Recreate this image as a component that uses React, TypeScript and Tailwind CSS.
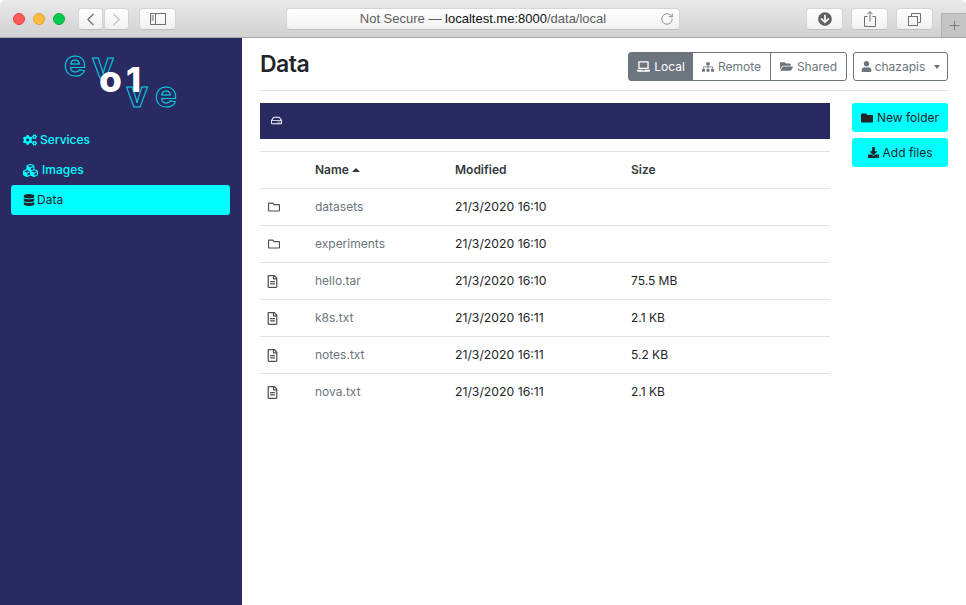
import { ChevronLeft, ChevronRight, RotateCw, Plus } from "lucide-react";
import {
  FaCogs,
  FaCubes,
  FaDatabase,
  FaLaptop,
  FaSitemap,
  FaFolderOpen,
  FaUser,
  FaFolder,
  FaDownload,
  FaRegHdd,
  FaRegFolder,
  FaRegFileAlt,
  FaArrowCircleDown,
} from "react-icons/fa";

const FILES = [
  { name: "datasets", modified: "21/3/2020 16:10", size: "", dir: true },
  { name: "experiments", modified: "21/3/2020 16:10", size: "", dir: true },
  { name: "hello.tar", modified: "21/3/2020 16:10", size: "75.5 MB", dir: false },
  { name: "k8s.txt", modified: "21/3/2020 16:11", size: "2.1 KB", dir: false },
  { name: "notes.txt", modified: "21/3/2020 16:11", size: "5.2 KB", dir: false },
  { name: "nova.txt", modified: "21/3/2020 16:11", size: "2.1 KB", dir: false },
];

function ToolButton({ className, children }: { className: string; children?: React.ReactNode }) {
  return (
    <div
      className={`h-[22px] flex items-center justify-center rounded-[4px] bg-gradient-to-b from-white to-[#f1f1f1] border border-[#d4d4d4] border-b-[#bdbdbd] ${className}`}
    >
      {children}
    </div>
  );
}

function TitleBar() {
  return (
    <div className="h-[38px] flex-shrink-0 flex items-start bg-gradient-to-b from-[#ebeaeb] to-[#d2d1d2] border-b border-[#a9a9a9] rounded-t-[5px] font-['Liberation_Sans',sans-serif]">
      {/* Traffic lights */}
      <div className="flex gap-2 pl-[13px] pt-[13px] w-[78px]">
        <span className="w-3 h-3 rounded-full bg-[#fc5b57] border border-[#e3483f]" />
        <span className="w-3 h-3 rounded-full bg-[#fdbc40] border border-[#e0a030]" />
        <span className="w-3 h-3 rounded-full bg-[#00ca4e] border border-[#13ae3c]" />
      </div>
      <div className="flex gap-px pt-2">
        <ToolButton className="w-[25px]">
          <ChevronLeft size={21} strokeWidth={1.4} className="text-[#6f6f6f]" />
        </ToolButton>
        <ToolButton className="w-[25px]">
          <ChevronRight size={21} strokeWidth={1.4} className="text-[#c2c2c2]" />
        </ToolButton>
      </div>
      <div className="pt-2 pl-[10px]">
        <ToolButton className="w-[37px]">
          <svg width="16" height="12" viewBox="0 0 16 12" fill="none" stroke="#707070">
            <rect x="0.5" y="0.5" width="15" height="11" />
            <path d="M5.5 0.5V11.5M1.5 3H4M1.5 5H4M1.5 7H4" />
          </svg>
        </ToolButton>
      </div>
      <div className="pt-2 pl-[110px]">
        <ToolButton className="w-[394px] relative text-[13px] text-[#5f5f5f]">
          <span>
            Not Secure — <span className="text-[#111]">localtest.me:8000</span>/data/local
          </span>
          <RotateCw size={14} strokeWidth={1.2} className="absolute right-[5px] top-[3px] text-[#666]" />
        </ToolButton>
      </div>
      <div className="flex gap-2 pt-2 pl-[126px]">
        <ToolButton className="w-[37px]">
          <FaArrowCircleDown size={14} className="text-[#5f5f5f]" />
        </ToolButton>
        <ToolButton className="w-[37px]">
          <svg width="12" height="16" viewBox="0 0 12 16" fill="none" stroke="#707070">
            <path d="M3.5 5.5H0.5V15.5H11.5V5.5H8.5M6 10.5V0.8M3.5 3L6 0.7L8.5 3" />
          </svg>
        </ToolButton>
        <ToolButton className="w-[37px]">
          <svg width="13" height="13" viewBox="0 0 13 13" fill="none" stroke="#707070">
            <rect x="0.5" y="3.5" width="9" height="9" />
            <path d="M3.5 3.5V0.5H12.5V9.5H9.5" />
          </svg>
        </ToolButton>
      </div>
      <div className="ml-2 mt-[13px] w-[25px] h-6 flex items-center justify-center bg-[#c6c5c6] border-l border-t border-[#b0b0b0]">
        <Plus size={15} strokeWidth={1} className="text-[#555]" />
      </div>
    </div>
  );
}

function Logo() {
  return (
    <svg width="120" height="60" viewBox="0 0 120 60" className="overflow-visible font-['Inter',sans-serif]">
      <g fill="none" stroke="#00d2e0" strokeWidth="1" fontSize="37" fontWeight="700">
        <text x="-1" y="23">e</text>
        <text x="27" y="25">v</text>
        <text x="61" y="54">v</text>
        <text x="90" y="54">e</text>
      </g>
      <g fill="#fff" fontWeight="800">
        <text x="34" y="39" fontSize="37">o</text>
        <text x="61" y="39" fontSize="34">1</text>
      </g>
    </svg>
  );
}

function Sidebar() {
  return (
    <aside className="w-[242px] flex-shrink-0 bg-[#2a2a62] flex flex-col">
      <div className="h-[50px] pl-[65px] pt-[15px]">
        <Logo />
      </div>
      <nav className="mt-[37px] pl-[11px] pr-[12px] flex flex-col text-[12px]">
        <div className="h-[30px] pl-3 flex items-center gap-[3px] font-medium text-[#00ffff]">
          <FaCogs size={14} /> Services
        </div>
        <div className="h-[30px] pl-3 flex items-center gap-[4px] font-medium text-[#00ffff]">
          <FaCubes size={15} /> Images
        </div>
        <div className="h-[30px] pl-3 flex items-center gap-[2px] rounded-[3px] bg-[#00ffff] text-[#212529]">
          <FaDatabase size={12} /> Data
        </div>
      </nav>
    </aside>
  );
}

function Header() {
  return (
    <div className="h-[53px] mx-[18px] flex items-center justify-between border-b border-[#dee2e6]">
      <h1 className="text-[23px] tracking-[-0.5px] font-semibold text-[#212529] leading-none">Data</h1>
      <div className="flex items-center gap-[6px] mt-[5px] text-[12px] text-[#6c757d]">
        <div className="flex h-[29px] rounded-[3px] border border-[#6c757d]">
          <div className="w-[64px] flex items-center justify-center gap-[4px] bg-[#6c757d] text-white">
            <FaLaptop size={13} /> Local
          </div>
          <div className="w-[78px] flex items-center justify-center gap-[4px] border-r border-[#6c757d]">
            <FaSitemap size={12} /> Remote
          </div>
          <div className="w-[75px] flex items-center justify-center gap-[4px]">
            <FaFolderOpen size={13} /> Shared
          </div>
        </div>
        <div className="w-[95px] h-[29px] flex items-center justify-center gap-[3px] rounded-[3px] border border-[#6c757d]">
          <FaUser size={11} /> chazapis
          <span className="ml-[6px] w-0 h-0 border-x-[3.5px] border-x-transparent border-t-[4px] border-t-[#6c757d]" />
        </div>
      </div>
    </div>
  );
}

function FileTable() {
  return (
    <div className="w-[570px]">
      <div className="h-9 bg-[#2a2a62] flex items-center pl-[11px]">
        <FaRegHdd size={11} className="text-white -mt-[1px]" />
      </div>
      <div className="mt-3 border-t border-[#dee2e6]">
        <div className="h-[36px] flex items-center font-semibold text-[#343a40] text-[12px]">
          <div className="w-[55px]" />
          <div className="w-[140px] flex items-center gap-[3px]">
            Name
            <span className="w-0 h-0 border-x-[4px] border-x-transparent border-b-[4px] border-b-[#343a40]" />
          </div>
          <div className="w-[176px]">Modified</div>
          <div>Size</div>
        </div>
        {FILES.map((f) => (
          <div key={f.name} className="h-[37px] flex items-center border-t border-[#dee2e6] text-[12px] text-[#212529]">
            <div className="w-[55px] pl-2 text-[#495057]">
              {f.dir ? <FaRegFolder size={12} /> : <FaRegFileAlt size={13} className="-ml-[2px]" />}
            </div>
            <div className="w-[140px] text-[#6c757d]">{f.name}</div>
            <div className="w-[176px] text-[12.25px]">{f.modified}</div>
            <div>{f.size}</div>
          </div>
        ))}
      </div>
    </div>
  );
}

function Actions() {
  return (
    <div className="w-[96px] flex flex-col gap-[6px] text-[12px] text-[#212529]">
      <div className="h-[29px] rounded-[3px] bg-[#00ffff] flex items-center justify-center gap-[4px]">
        <FaFolder size={12} /> New folder
      </div>
      <div className="h-[29px] rounded-[3px] bg-[#00ffff] flex items-center justify-center gap-[4px]">
        <FaDownload size={11} /> Add files
      </div>
    </div>
  );
}

export default function App() {
  return (
    <div className="w-[966px] h-[605px] flex flex-col overflow-hidden bg-white font-['Inter',sans-serif]">
      <TitleBar />
      <div className="flex flex-1 min-h-0">
        <Sidebar />
        <main className="flex-1">
          <Header />
          <div className="mt-3 mx-[18px] flex justify-between">
            <FileTable />
            <Actions />
          </div>
        </main>
      </div>
    </div>
  );
}
